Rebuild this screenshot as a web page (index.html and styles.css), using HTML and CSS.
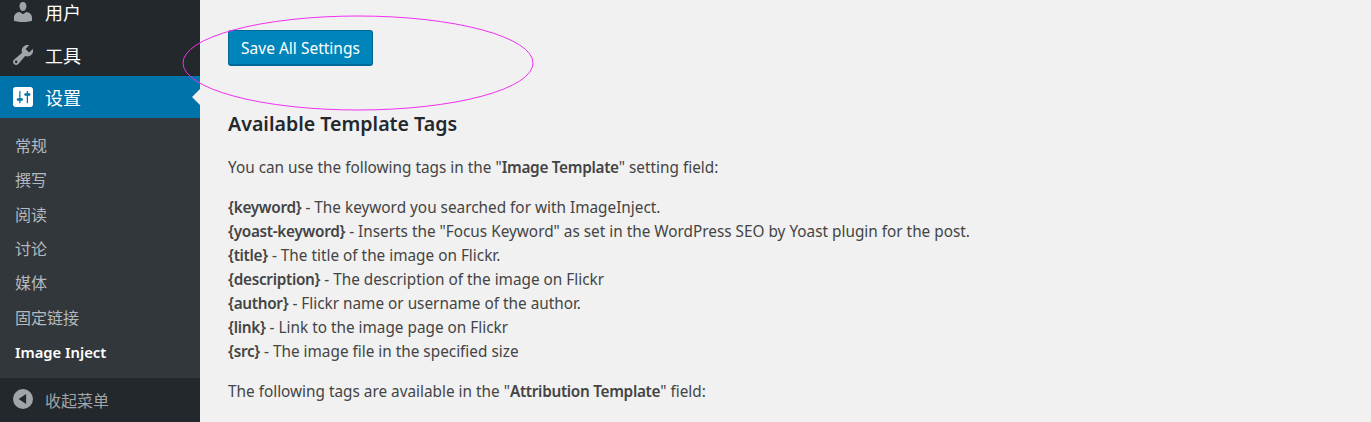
FILE: index.html
```html
<!DOCTYPE html>
<html lang="zh-CN">

<head>
  <meta charset="UTF-8">
  <title>Image Inject</title>
  <link rel="stylesheet" href="styles.css">
</head>

<body>
  <div class="layout">
    <div class="sidebar">
      <div class="menu-item first">
        <svg class="menu-icon" viewBox="2 2 16 16"><path d="M10 9.250c-2.270 0-2.730-3.440-2.730-3.440C7 4.020 7.820 2 9.970 2c2.160 0 2.980 2.020 2.710 3.810 0 0-.41 3.440-2.680 3.440zm0 2.570L12.720 10c2.390 0 4.520 2.330 4.520 4.530v2.490s-3.650 1.130-7.240 1.130c-3.650 0-7.240-1.130-7.240-1.130v-2.490c0-2.250 1.940-4.530 4.640-4.530z"/></svg>
        <span>用户</span>
      </div>
      <div class="menu-item">
        <svg class="menu-icon" viewBox="2 2 16 16"><path fill-rule="evenodd" d="M16.680 9.770c-1.340 1.340-3.300 1.670-4.950.99l-5.410 6.520c-.99.99-2.590.99-3.570 0-.99-.98-.99-2.580 0-3.570l6.520-5.420c-.68-1.650-.35-3.610.99-4.950 1.280-1.280 3.120-1.620 4.720-1.060l-2.890 2.890 2.820 2.820 2.890-2.870c.560 1.600.22 3.440-1.060 4.720zM3.810 16.210c.4.390 1.040.39 1.430 0 .4-.4.4-1.040 0-1.440-.39-.39-1.030-.39-1.430 0-.39.4-.39 1.040 0 1.440z"/></svg>
        <span>工具</span>
      </div>
      <div class="menu-item current">
        <svg class="menu-icon" viewBox="2 2 16 16"><path fill-rule="evenodd" d="M18 16V4c0-1.100-.9-2-2-2H4c-1.100 0-2 .9-2 2v12c0 1.100.9 2 2 2h12c1.100 0 2-.9 2-2zM8 11h1c.55 0 1 .45 1 1s-.45 1-1 1H8v1.500c0 .28-.22.5-.5.5s-.5-.22-.5-.5V13H6c-.55 0-1-.45-1-1s.45-1 1-1h1V5.500c0-.28.22-.5.5-.5s.5.22.5.5V11zm5-2h-1c-.55 0-1-.45-1-1s.45-1 1-1h1V5.500c0-.28.22-.5.5-.5s.5.22.5.5V7h1c.55 0 1 .45 1 1s-.45 1-1 1h-1v5.500c0 .28-.22.5-.5.5s-.5-.22-.5-.5V9z"/></svg>
        <span>设置</span>
      </div>
      <ul class="submenu">
        <li>常规</li>
        <li>撰写</li>
        <li>阅读</li>
        <li>讨论</li>
        <li>媒体</li>
        <li>固定链接</li>
        <li class="active">Image Inject</li>
      </ul>
      <div class="collapse">
        <svg class="menu-icon" viewBox="2 2 16 16"><path fill-rule="evenodd" d="M10 2a8 8 0 1 1 0 16 8 8 0 0 1 0-16zm2.500 4L6.500 10l6 4z"/></svg>
        <span>收起菜单</span>
      </div>
    </div>

    <div class="content">
      <button class="save-btn">Save All Settings</button>
      <h2>Available Template Tags</h2>
      <p>You can use the following tags in the "<strong>Image Template</strong>" setting field:</p>
      <p>
        <strong>{keyword}</strong> - The keyword you searched for with ImageInject.<br>
        <strong>{yoast-keyword}</strong> - Inserts the "Focus Keyword" as set in the WordPress SEO by Yoast plugin for the post.<br>
        <strong>{title}</strong> - The title of the image on Flickr.<br>
        <strong>{description}</strong> - The description of the image on Flickr<br>
        <strong>{author}</strong> - Flickr name or username of the author.<br>
        <strong>{link}</strong> - Link to the image page on Flickr<br>
        <strong>{src}</strong> - The image file in the specified size
      </p>
      <p>The following tags are available in the "<strong>Attribution Template</strong>" field:</p>
    </div>
  </div>

  <!-- hand drawn annotation on top of the screenshot -->
  <svg class="annotation" viewBox="0 0 352 96"><ellipse cx="176" cy="48" rx="175" ry="47"/></svg>
</body>

</html>
```

FILE: styles.css
```css
html, body {
  height: 100%;
}

body {
  margin: 0;
  background-color: #f1f1f1;
  color: #444;
  font-family: "Noto Sans", "Noto Sans CJK SC", sans-serif;
  font-size: 15.33px;
  overflow: hidden;
  position: relative;
}

.layout {
  display: flex;
  height: 422px;
}

.sidebar {
  width: 200px;
  flex-shrink: 0;
  display: flex;
  flex-direction: column;
  background-color: #23282d;
  color: #fff;
}

.menu-item {
  height: 42px;
  display: flex;
  align-items: center;
  gap: 12px;
  padding-left: 13px;
  font-size: 18px;
  font-family: "Noto Sans CJK SC", sans-serif;
  position: relative;
}

.menu-item.first {
  height: 34px;
  padding-bottom: 11px;
  box-sizing: border-box;
}

.menu-icon {
  width: 20px;
  height: 20px;
  fill: #a0a5aa;
  flex-shrink: 0;
}

.current {
  background-color: #0073aa;
}

.current .menu-icon {
  fill: #fff;
}

.current::after {
  content: "";
  position: absolute;
  right: 0;
  top: 13px;
  border: 8px solid transparent;
  border-right-color: #f1f1f1;
  border-left-width: 0;
}

.submenu {
  list-style-type: none;
  margin: 0;
  padding: 10.1px 0 9.9px;
  background-color: #32373c;
  color: #b4b9be;
  font-size: 16px;
  font-family: "Noto Sans CJK SC", sans-serif;
}

.submenu li {
  height: 34.3px;
  line-height: 34.3px;
  padding-left: 15px;
}

.submenu .active {
  color: #fff;
  font-family: "Noto Sans", sans-serif;
  font-weight: 600;
  font-size: 14.8px;
  line-height: 36px;
}

.collapse {
  flex: 1;
  display: flex;
  align-items: flex-start;
  gap: 12px;
  padding: 11px 0 0 13px;
  color: #a0a5aa;
  font-size: 16px;
  font-family: "Noto Sans CJK SC", sans-serif;
}

.collapse span {
  line-height: 22px;
}

.content {
  padding: 30px 0 0 28px;
}

.save-btn {
  display: block;
  width: 145px;
  height: 36px;
  padding: 0;
  background-color: #0085ba;
  border: 1px solid #006799;
  border-bottom-width: 2px;
  border-radius: 3px;
  color: #fff;
  font-family: inherit;
  font-size: 15.5px;
}

h2 {
  margin: 42px 0 0;
  color: #23282d;
  font-size: 19.6px;
  font-weight: 600;
  line-height: 32px;
}

p {
  margin: 15px 0 0;
  line-height: 24px;
}

p + p {
  margin-top: 16px;
}

strong {
  font-weight: 600;
  letter-spacing: -0.3px;
}

.annotation {
  position: absolute;
  left: 182px;
  top: 15px;
  width: 352px;
  height: 96px;
  fill: none;
  stroke: #f22ff0;
  stroke-width: 1;
}
```
